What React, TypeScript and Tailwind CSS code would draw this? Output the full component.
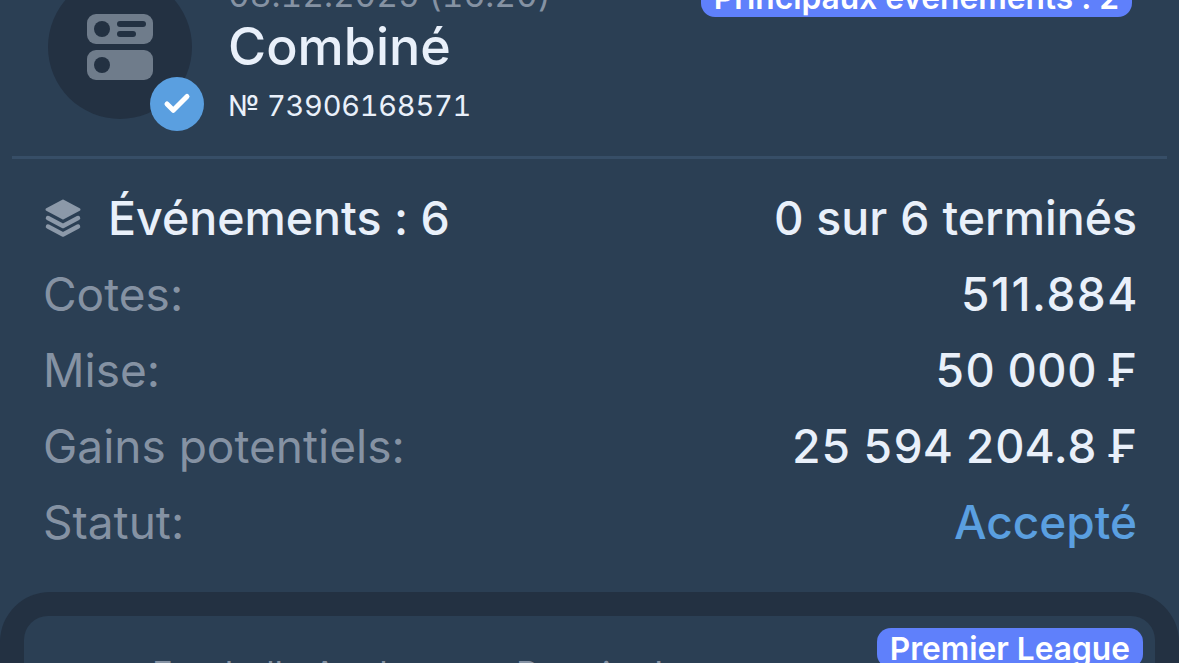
import { Check } from 'lucide-react';

const rows = [
  { label: 'Cotes:', value: '511.884', valueClass: 'text-[#e9f0fa] tracking-[1.500px] -mr-[2px]' },
  { label: 'Mise:', value: '50 000 ₣', valueClass: 'text-[#e9f0fa] tabular-nums' },
  { label: 'Gains potentiels:', value: '25 594 204.8 ₣', valueClass: 'text-[#e9f0fa] tabular-nums' },
  { label: 'Statut:', value: 'Accepté', valueClass: 'text-[#5a9fe0]' },
];

const CouponIcon = () => (
  <svg width="66" height="66" viewBox="0 0 66 66">
    <rect x="0" y="0" width="66" height="30" rx="9" fill="#6f7c8b" />
    <circle cx="15" cy="15" r="8" fill="#233142" />
    <rect x="30" y="7" width="29" height="6" rx="3" fill="#233142" />
    <rect x="30" y="17" width="19" height="6" rx="3" fill="#233142" />
    <rect x="0" y="36" width="66" height="30" rx="9" fill="#6f7c8b" />
    <circle cx="15" cy="51" r="8" fill="#233142" />
  </svg>
);

const LayersIcon = () => (
  <svg width="38" height="39" viewBox="0 0 38 39" className="shrink-0" stroke="#8c99a9" strokeLinejoin="round" strokeLinecap="round">
    <path d="M19 2 35 10.500 19 19 3 10.500z" fill="#8c99a9" strokeWidth="3" />
    <path d="M4 19 19 27 34 19" fill="none" strokeWidth="4.500" />
    <path d="M4 27.500 19 35.500 34 27.500" fill="none" strokeWidth="4.500" />
  </svg>
);

export default function App() {
  return (
    <div className="h-[663px] w-[1179px] overflow-hidden bg-[#2b3f54] font-['Inter',sans-serif] [font-feature-settings:'calt'_0]">
      <div className="mt-[-24px] flex items-start justify-between pl-12 pr-[47px]">
        <div className="flex gap-[38px]">
          <div className="relative mt-[-1px] h-36 w-36 shrink-0 rounded-full bg-[#233142]">
            <div className="flex h-full items-center justify-center">
              <CouponIcon />
            </div>
            <div className="absolute right-[-12px] bottom-[-12px] flex h-[54px] w-[54px] items-center justify-center rounded-full bg-[#5a9fe0]">
              <Check size={30} strokeWidth={4} className="text-white" />
            </div>
          </div>
          <div className="-ml-0.5">
            <div className="pt-[2px] text-[33.500px] leading-[34px] tabular-nums text-[#8592a3]">08.12.2025 (16:20)</div>
            <div className="mt-[5px] text-[52px] font-[450] leading-[60px] text-[#e9f0fa]">Combiné</div>
            <div className="mt-[12px] text-[29px] leading-[34px] tracking-[-0.25px] tabular-nums text-[#e9f0fa]">№ 73906168571</div>
          </div>
        </div>
        <div className="rounded-[14px] bg-[#5f80fb] px-[13px] pb-[2px] pt-[4px] text-[31.700px] font-semibold leading-[35px] text-white">
          Principaux événements : 2
        </div>
      </div>

      <div className="mx-3 mt-[33px] h-[3px] bg-[#374e67]" />

      <div className="mt-[31px] flex items-center justify-between pl-[44px] pr-[42px]">
        <div className="flex items-center gap-[26px]">
          <LayersIcon />
          <span className="text-[46.500px] font-[450] leading-[56px] text-[#e9f0fa]">Événements : 6</span>
        </div>
        <span className="text-[46.500px] font-[450] leading-[56px] tabular-nums text-[#e9f0fa]">0 sur 6 terminés</span>
      </div>

      <div className="mt-[20px] flex flex-col gap-5 pl-[43px] pr-[42px]">
        {rows.map((row) => (
          <div key={row.label} className="flex justify-between text-[46px] leading-[56px]">
            <span className="text-[#8592a3]">{row.label}</span>
            <span className={`font-[450] ${row.valueClass}`}>{row.value}</span>
          </div>
        ))}
      </div>

      <div className="mt-[42px] h-[200px] rounded-t-[50px] bg-[#233142] px-6 pt-6">
        <div className="relative h-[200px] rounded-t-[24px] bg-[#2b3f54] pl-[128px]">
          <div className="pt-[41px] text-[35px] leading-[34px] text-[#8592a3]">Football · Angleterre · Premier League</div>
          <div className="absolute right-3 top-3 rounded-[14px] bg-[#5f80fb] px-[13px] pb-[1px] pt-[3px] text-[31.700px] font-semibold leading-[36px] text-white">
            Premier League
          </div>
        </div>
      </div>
    </div>
  );
}
